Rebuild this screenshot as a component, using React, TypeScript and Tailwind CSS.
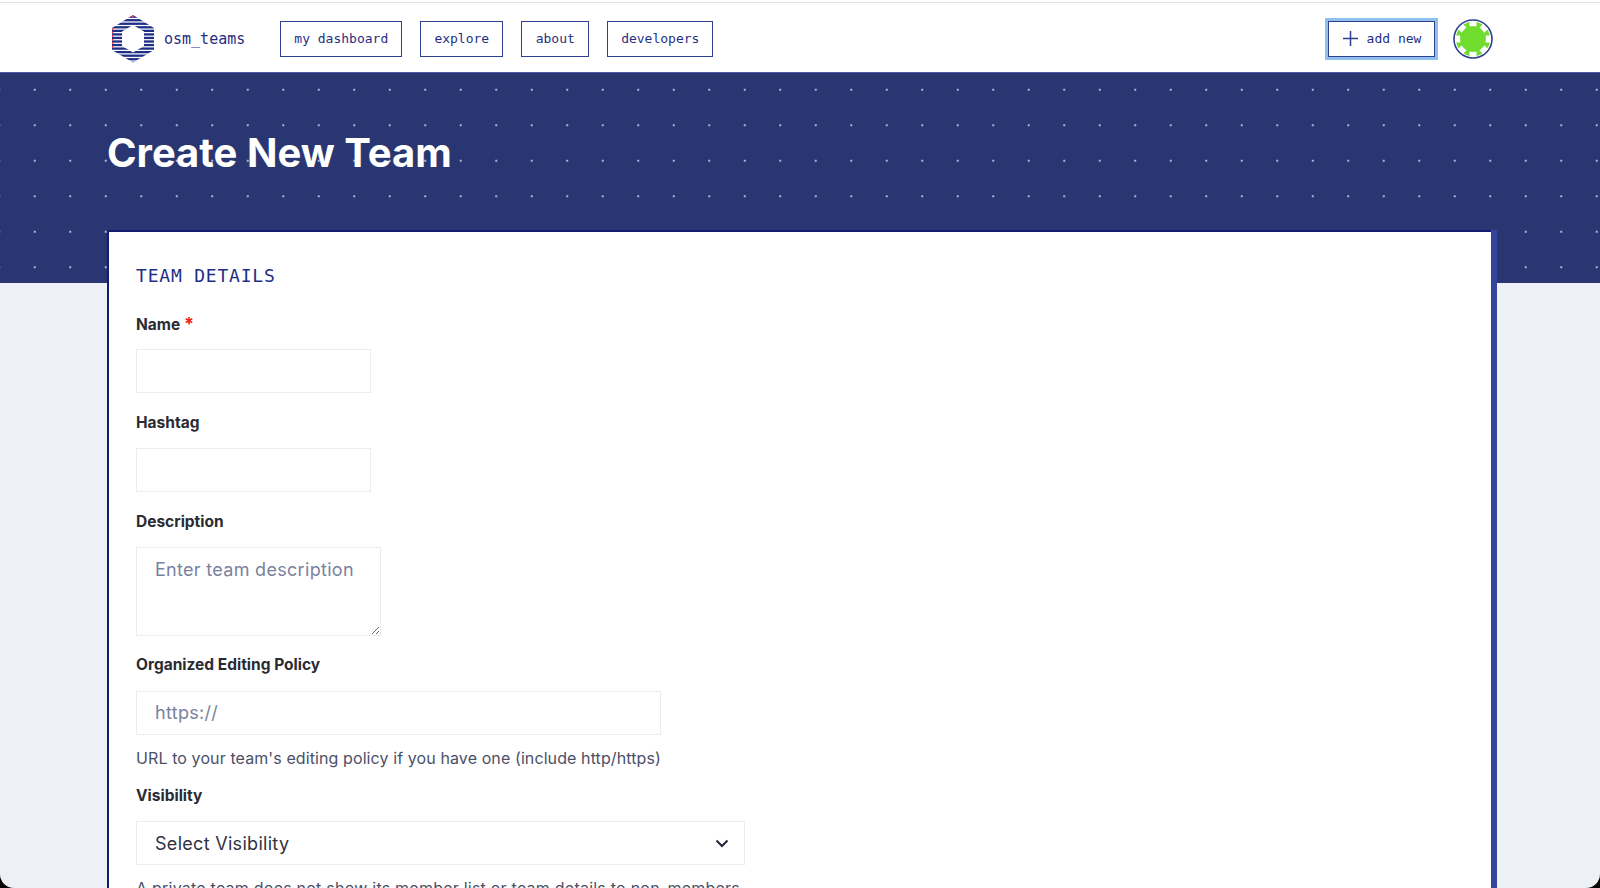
import React from "react";

const mono = "font-['DejaVu_Sans_Mono',monospace]";
const sans = "font-['Inter',sans-serif]";

function Logo() {
  const ys = [13, 16.6, 20.2, 23.8, 27.4, 31];
  return (
    <svg width="44" height="48" viewBox="0 0 44 48" className="-ml-[1px] shrink-0">
      <defs>
        <clipPath id="hex">
          <path clipRule="evenodd" d="M22 0 L43 13 V35 L22 47.5 L1 35 V13 Z M22 10 L11 16.5 V31 L22 37.5 L33 31 V16.5 Z" />
        </clipPath>
      </defs>
      <g clipPath="url(#hex)">
        {Array.from({ length: 14 }, (_, i) => (
          <rect key={i} x="0" y={0.5 + i * 3.55} width="44" height="2.3" fill="#1f2f85" />
        ))}
        {ys.map((y, i) => (
          <rect key={i} x="0.8" y={y} width="1.4" height="1.8" fill="#e63946" />
        ))}
        <rect x="19" y="0" width="4" height="2.2" fill="#e63946" />
      </g>
    </svg>
  );
}

function Avatar() {
  const squares = [0, 45, 90, 135, 180, 225, 270, 315];
  return (
    <svg width="40" height="40" viewBox="0 0 40 40" className="shrink-0">
      <circle cx="20" cy="20" r="19" fill="#fff" stroke="#2f3f93" strokeWidth="1.6" />
      <circle cx="20" cy="20" r="17.2" fill="#6fdc2e" />
      {squares.map((a) => (
        <rect key={a} x="16.5" y="2" width="7" height="5.5" fill="#fff" transform={`rotate(${a} 20 20)`} />
      ))}
      <circle cx="20" cy="20" r="12.8" fill="#6fdc2e" />
    </svg>
  );
}

function NavButton({ children, w }: { children: React.ReactNode; w: string }) {
  return (
    <a className={`flex h-[36px] items-center justify-center border border-[#2f3f8f] text-[13px] text-[#1f2f85] ${w}`}>
      {children}
    </a>
  );
}

function Label({ children }: { children: React.ReactNode }) {
  return <label className="block h-[24px] text-[15.5px] font-bold leading-[24px] text-[#2b2b33]">{children}</label>;
}

export default function App() {
  return (
    <div className="h-[888px] overflow-hidden bg-[#0a0505]">
      <div className={`h-[888px] overflow-hidden rounded-b-[14px] bg-[#edf1f5] ${sans}`}>
        <div className="h-[3px] border-b border-[#dfe1e4] bg-white" />
        <header className={`flex h-[69px] items-center bg-white pl-[112px] pr-[107px] pt-[2px] ${mono}`}>
          <div className="flex items-center gap-[9px]">
            <Logo />
            <span className="mt-[1px] text-[15px] text-[#1f2f85]">osm_teams</span>
          </div>
          <nav className="ml-[35px] flex gap-[18px]">
            <NavButton w="w-[122px]">my dashboard</NavButton>
            <NavButton w="w-[83px]">explore</NavButton>
            <NavButton w="w-[68px]">about</NavButton>
            <NavButton w="w-[106px]">developers</NavButton>
          </nav>
          <div className="ml-auto flex items-center gap-[18px]">
            <button className="flex h-[36px] w-[107px] items-center justify-center gap-[8px] border border-[#2f3f8f] bg-white text-[13px] text-[#1f2f85] shadow-[0_0_0_3px_#90c0ee]">
              <svg width="17" height="17" viewBox="0 0 17 17">
                <path d="M8.5 1v15M1 8.5h15" stroke="#2f3f8f" strokeWidth="1.5" fill="none" />
              </svg>
              <span>add new</span>
            </button>
            <Avatar />
          </div>
        </header>
        <section className="h-[211px] border-t border-[#4a5aa5] bg-[#293671] bg-[radial-gradient(circle,#d8dff0_0.6px,transparent_1px)] bg-[size:35.5px_35.5px] bg-[position:17px_-1px] pl-[107px] pt-[54px]">
          <h1 className="text-[40px] font-bold leading-[52px] text-white">Create New Team</h1>
        </section>
        <div className="ml-[107px] -mt-[53px] w-[1390px] border-r-[6px] border-[#33449a]">
          <main className="h-[700px] border-l-2 border-t-2 border-[#101d70] bg-white pl-[27px] pt-[32px]">
            <h2 className={`text-[18px] leading-[24px] tracking-[0.8px] text-[#1f2f85] ${mono}`}>TEAM DETAILS</h2>
            <div className="mt-[24px]">
              <Label>
                Name <span className="text-[18px] text-[#ee2222]">*</span>
              </Label>
              <input className="mt-[13px] block h-[44px] w-[235px] border border-[#e8edf3] bg-white" />
            </div>
            <div className="mt-[18px]">
              <Label>Hashtag</Label>
              <input className="mt-[13px] block h-[44px] w-[235px] border border-[#e8edf3] bg-white" />
            </div>
            <div className="mt-[18px]">
              <Label>Description</Label>
              <textarea
                className="mt-[13px] block h-[89px] w-[245px] resize border border-[#e8edf3] bg-white px-[18px] py-[8px] text-[18px] tracking-[0.3px] text-[#3a3f52] placeholder:text-[#7a82a0]"
                placeholder="Enter team description"
              />
            </div>
            <div className="mt-[17px]">
              <Label>Organized Editing Policy</Label>
              <input
                className="mt-[14px] block h-[44px] w-[525px] border border-[#e8edf3] bg-white px-[18px] pb-[2px] text-[18px] tracking-[0.3px] placeholder:text-[#7a82a0]"
                placeholder="https://"
              />
              <p className="mt-[11px] h-[24px] text-[16px] leading-[24px] tracking-[0.1px] text-[#4a5068]">
                URL to your team's editing policy if you have one (include http/https)
              </p>
            </div>
            <div className="mt-[14px]">
              <Label>Visibility</Label>
              <div className="mt-[13px] flex h-[44px] w-[609px] items-center justify-between border border-[#e8edf3] bg-white pl-[18px] pr-[14px] text-[18px] tracking-[0.3px] text-[#2f3242]">
                <span>Select Visibility</span>
                <svg width="16" height="16" viewBox="0 0 16 16">
                  <path d="M2.5 5.5 8 11l5.5-5.5" stroke="#23263a" strokeWidth="2" fill="none" />
                </svg>
              </div>
              <p className="mt-[11px] whitespace-nowrap text-[16px] leading-[24px] tracking-[0.23px] text-[#4a5068]">
                A private team does not show its member list or team details to non-members.
              </p>
            </div>
          </main>
        </div>
      </div>
    </div>
  );
}
